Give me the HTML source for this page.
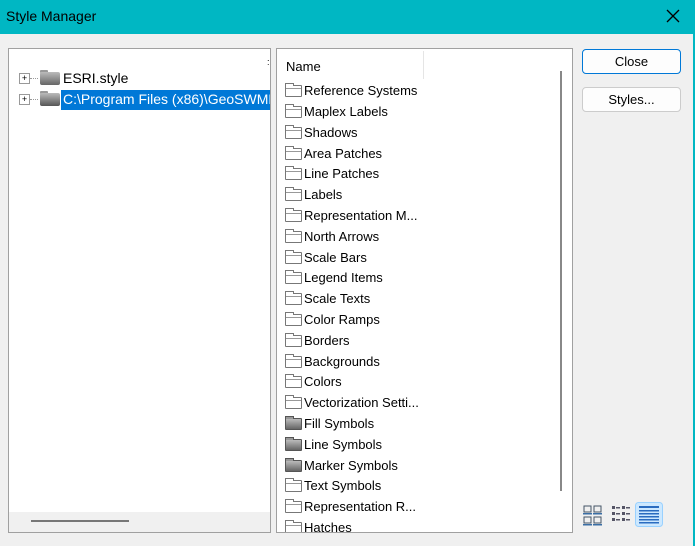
<!DOCTYPE html><html><head><style>
body{margin:0;width:695px;height:546px;background:#f0f0f0;font-family:"Liberation Sans",sans-serif;position:relative;overflow:hidden;font-size:13px;color:#000}
.t{position:absolute;left:0;top:0;width:695px;height:34px;background:#00b7c3}
.t span{position:absolute;left:6px;top:8px;font-size:14px}
.x{position:absolute;right:14px;top:8px}
.rb{position:absolute;right:0;top:34px;width:2px;height:512px;background:#00b7c3}
.p{position:absolute;background:#fff;border:1px solid #a0a0a0;box-sizing:border-box}
.row{position:absolute;left:8px;height:20px;line-height:20px;white-space:nowrap}
.f{display:inline-block;position:relative;width:17px;height:12px;vertical-align:-2px;margin-right:2px;border:1px solid #777;box-sizing:border-box;background:linear-gradient(#fff 0 2px,#999 2px 3px,#fff 3px);border-radius:1px}
.f::before{content:"";position:absolute;left:-1px;top:-3px;width:7px;height:2px;border:1px solid #777;border-bottom:none;background:#fff}
.f.g{background:linear-gradient(#bbb,#666);border-color:#555}
.f.g::before{background:#999;border-color:#555}
.btn{position:absolute;left:582px;width:99px;height:25px;border:1px solid #ccc;border-radius:4px;background:#fdfdfd;text-align:center;line-height:24px;box-sizing:border-box}
</style></head><body>
<div class="t"><span>Style Manager</span>
<svg class="x" width="16" height="16"><path d="M2 2L14 14M14 2L2 14" stroke="#000" stroke-width="1.3"/></svg></div>
<div class="rb"></div>
<div class="p" style="left:8px;top:48px;width:263px;height:485px">
<div style="position:absolute;left:0;right:0;bottom:0;height:20px;background:#f0f0f0"></div>
<div style="position:absolute;left:22px;bottom:10px;width:98px;height:2px;background:#777"></div>
<div style="position:absolute;left:258px;top:8px;font-size:9px">:</div>
<div style="position:absolute;left:10px;top:24px;width:9px;height:9px;border:1px solid #999;font-size:9px;line-height:8px;text-align:center">+</div>
<div style="position:absolute;left:10px;top:45px;width:9px;height:9px;border:1px solid #999;font-size:9px;line-height:8px;text-align:center">+</div>
<div style="position:absolute;left:21px;top:29px;width:8px;border-top:1px dotted #999"></div>
<div style="position:absolute;left:21px;top:50px;width:8px;border-top:1px dotted #999"></div>
<div style="position:absolute;left:31px;top:21px;width:8px;height:3px;background:#999;border-radius:1px"></div>
<div style="position:absolute;left:31px;top:23px;width:20px;height:13px;background:linear-gradient(#bbb,#666);border-radius:2px"></div>
<div style="position:absolute;left:31px;top:42px;width:8px;height:3px;background:#999;border-radius:1px"></div>
<div style="position:absolute;left:31px;top:44px;width:20px;height:13px;background:linear-gradient(#bbb,#555);border-radius:2px"></div>
<div style="position:absolute;left:54px;top:21px;font-size:14px">ESRI.style</div>
<div style="position:absolute;left:52px;top:41px;width:207px;height:20px;background:#0078d7;color:#fff;font-size:14px;line-height:19px;padding-left:2px;overflow:hidden;white-space:nowrap">C:\Program Files (x86)\GeoSWMM\</div>
</div>
<div class="p" style="left:276px;top:48px;width:297px;height:485px;overflow:hidden">
<div style="position:absolute;left:9px;top:10px;font-size:13px">Name</div>
<div style="position:absolute;left:146px;top:2px;width:1px;height:28px;background:#e5e5e5"></div>
<div style="position:absolute;left:283px;top:22px;width:2px;height:420px;background:#888"></div>
<div class="row" style="top:32px"><i class="f"></i>Reference Systems</div>
<div class="row" style="top:53px"><i class="f"></i>Maplex Labels</div>
<div class="row" style="top:74px"><i class="f"></i>Shadows</div>
<div class="row" style="top:95px"><i class="f"></i>Area Patches</div>
<div class="row" style="top:115px"><i class="f"></i>Line Patches</div>
<div class="row" style="top:136px"><i class="f"></i>Labels</div>
<div class="row" style="top:157px"><i class="f"></i>Representation M...</div>
<div class="row" style="top:178px"><i class="f"></i>North Arrows</div>
<div class="row" style="top:199px"><i class="f"></i>Scale Bars</div>
<div class="row" style="top:219px"><i class="f"></i>Legend Items</div>
<div class="row" style="top:240px"><i class="f"></i>Scale Texts</div>
<div class="row" style="top:261px"><i class="f"></i>Color Ramps</div>
<div class="row" style="top:282px"><i class="f"></i>Borders</div>
<div class="row" style="top:303px"><i class="f"></i>Backgrounds</div>
<div class="row" style="top:323px"><i class="f"></i>Colors</div>
<div class="row" style="top:344px"><i class="f"></i>Vectorization Setti...</div>
<div class="row" style="top:365px"><i class="f g"></i>Fill Symbols</div>
<div class="row" style="top:386px"><i class="f g"></i>Line Symbols</div>
<div class="row" style="top:407px"><i class="f g"></i>Marker Symbols</div>
<div class="row" style="top:427px"><i class="f"></i>Text Symbols</div>
<div class="row" style="top:448px"><i class="f"></i>Representation R...</div>
<div class="row" style="top:469px"><i class="f"></i>Hatches</div>
</div>
<div class="btn" style="top:49px;border-color:#0078d7">Close</div>
<div class="btn" style="top:87px">Styles...</div>
<svg style="position:absolute;left:582px;top:502px" width="110" height="26">
<g fill="#3a6ea5"><rect x="2" y="4" width="7" height="6" fill="none" stroke="#456"/><rect x="12" y="4" width="7" height="6" fill="none" stroke="#456"/><rect x="2" y="15" width="7" height="6" fill="none" stroke="#456"/><rect x="12" y="15" width="7" height="6" fill="none" stroke="#456"/><rect x="1" y="11" width="9" height="1.5"/><rect x="11" y="11" width="9" height="1.5"/><rect x="1" y="22" width="9" height="1.5"/><rect x="11" y="22" width="9" height="1.5"/></g>
<g fill="#556"><rect x="30" y="4" width="3" height="3"/><rect x="34" y="5" width="4" height="1.5"/><rect x="40" y="4" width="3" height="3"/><rect x="44" y="5" width="4" height="1.5"/><rect x="30" y="10" width="3" height="3"/><rect x="34" y="11" width="4" height="1.5"/><rect x="40" y="10" width="3" height="3"/><rect x="44" y="11" width="4" height="1.5"/><rect x="30" y="16" width="3" height="3"/><rect x="34" y="17" width="4" height="1.5"/><rect x="40" y="16" width="3" height="3"/><rect x="44" y="17" width="4" height="1.5"/></g>
<rect x="53.5" y="0.5" width="27" height="24" rx="3" fill="#cce8ff" stroke="#99d1ff"/>
<g fill="#2a6cc0"><rect x="57" y="4" width="20" height="2"/><rect x="57" y="8" width="20" height="1.5"/><rect x="57" y="11" width="20" height="1.5"/><rect x="57" y="14" width="20" height="1.5"/><rect x="57" y="17" width="20" height="1.5"/><rect x="57" y="20" width="20" height="1.5"/></g>
</svg>
</body></html>
